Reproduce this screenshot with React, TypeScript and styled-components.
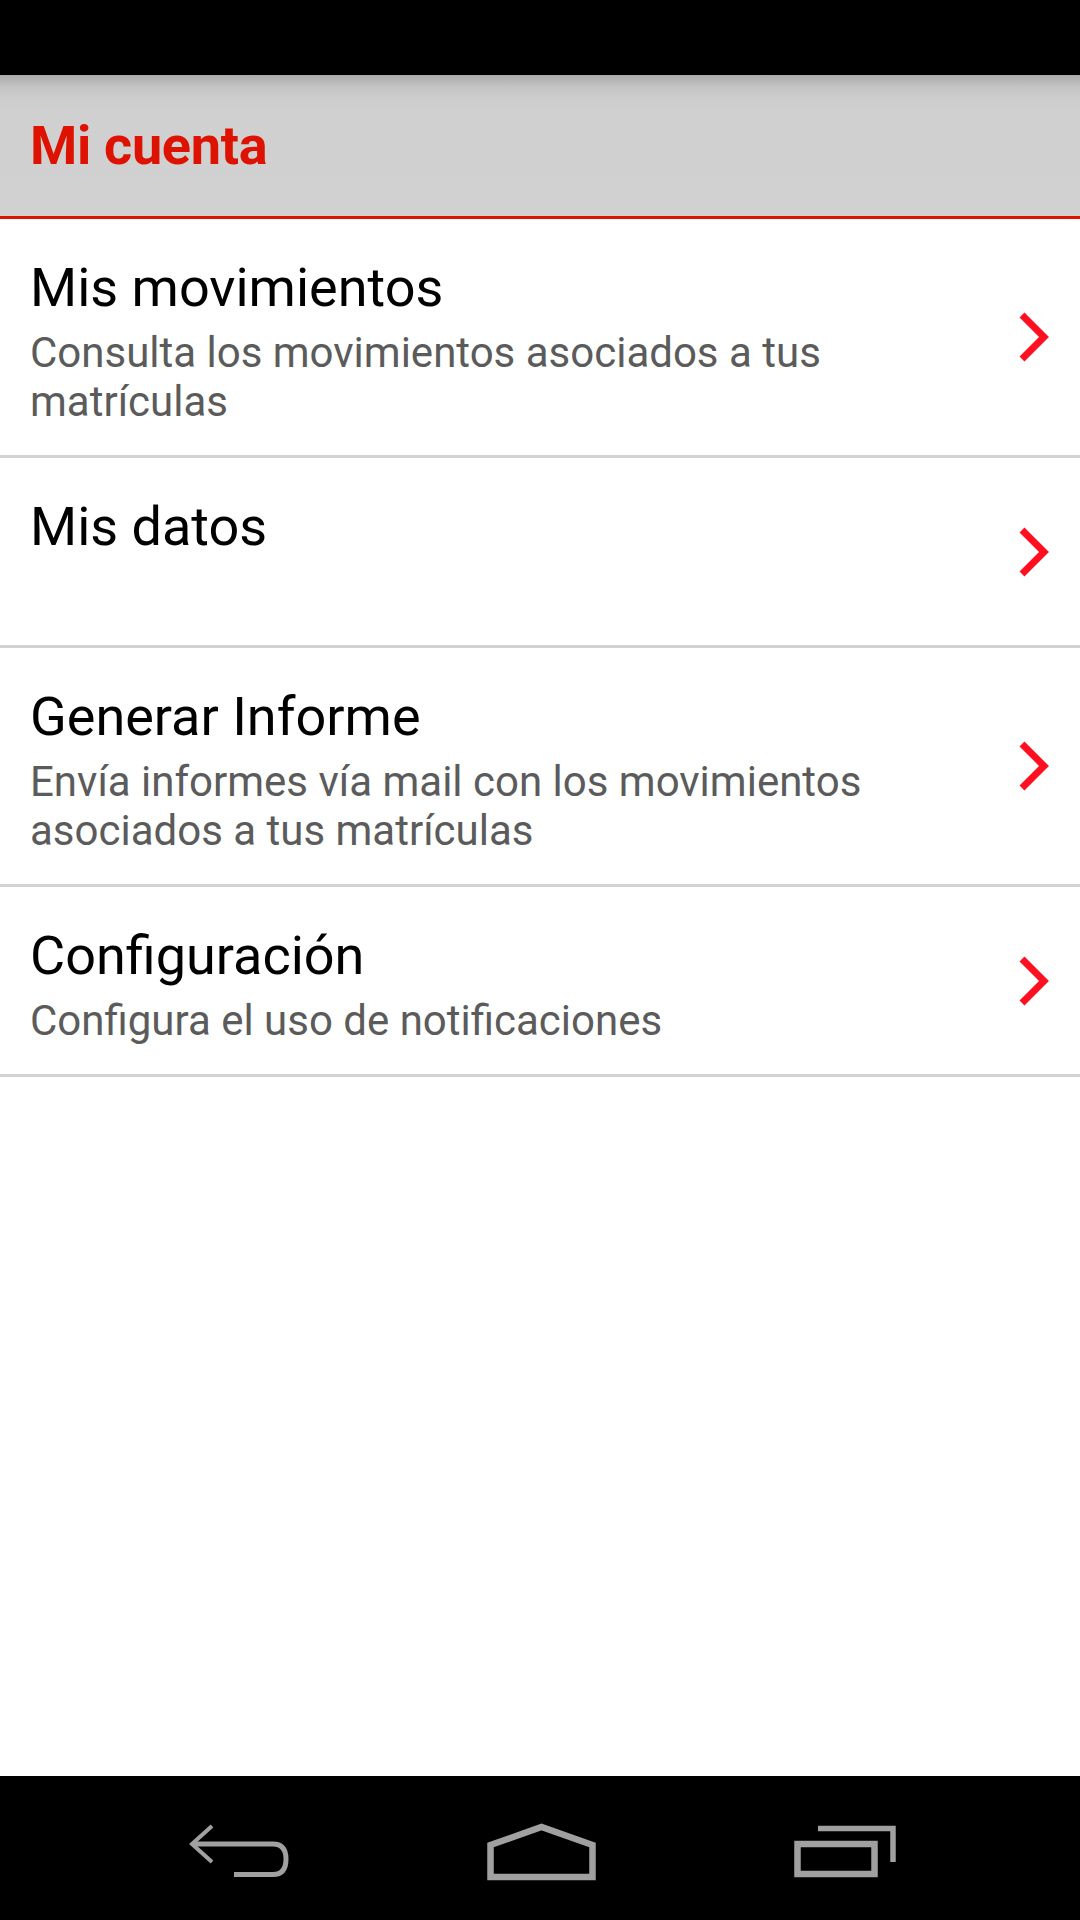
import React from 'react'
import styled, { createGlobalStyle } from 'styled-components'

const GlobalStyle = createGlobalStyle`
  html, body {
    margin: 0;
    padding: 0;
    background: #ffffff;
  }
  body {
    font-family: Roboto, 'Noto Sans', sans-serif;
  }
`

const Screen = styled.div`
  width: 1080px;
  height: 1920px;
  display: flex;
  flex-direction: column;
  background: #ffffff;
  overflow: hidden;
`

const StatusBar = styled.div`
  height: 75px;
  background: #000000;
  flex-shrink: 0;
`

const Header = styled.div`
  height: 141px;
  display: flex;
  align-items: center;
  padding: 0 30px;
  background: linear-gradient(to bottom, #a9a9a9 0px, #c4c4c4 12px, #cdcdcd 24px, #d0d0d0 40px, #d1d1d1 100%);
  border-bottom: 3px solid #dd1200;
  flex-shrink: 0;
`

const HeaderTitle = styled.h1`
  margin: 0;
  font-family: Roboto, sans-serif;
  font-weight: 700;
  font-size: 54px;
  letter-spacing: -0.3px;
  color: #dd1200;
`

const List = styled.div`
  flex: 1;
  display: flex;
  flex-direction: column;
`

const Row = styled.div`
  display: flex;
  align-items: center;
  gap: 30px;
  padding: 37px 30px 29px 30px;
  border-bottom: 3px solid #d2d2d2;
`

const RowText = styled.div`
  flex: 1;
  display: flex;
  flex-direction: column;
  gap: 8px;
`

const RowTitle = styled.div`
  font-family: Roboto, sans-serif;
  font-size: 54px;
  line-height: 64px;
  color: #000000;
`

const RowSubtitle = styled.div`
  font-family: Roboto, sans-serif;
  font-size: 42px;
  line-height: 49px;
  min-height: 49px;
  color: #5b5b5b;
`

const Chevron = styled.svg`
  flex-shrink: 0;
  width: 32px;
  height: 50px;
  margin-top: -8px;
`

const NavBar = styled.div`
  height: 144px;
  background: #000000;
  display: flex;
  align-items: center;
  justify-content: center;
  gap: 196px;
  padding: 6px 0 0 6px;
  box-sizing: border-box;
  flex-shrink: 0;
`

const NavIcon = styled.svg`
  display: block;
`

const items = [
  { title: 'Mis movimientos', subtitle: 'Consulta los movimientos asociados a tus matrículas' },
  { title: 'Mis datos', subtitle: '' },
  { title: 'Generar Informe', subtitle: 'Envía informes vía mail con los movimientos asociados a tus matrículas' },
  { title: 'Configuración', subtitle: 'Configura el uso de notificaciones' },
]

const ArrowRight = () => (
  <Chevron viewBox="0 0 32 50">
    <path d="M4 3 L26 25 L4 47" fill="none" stroke="#ff1020" strokeWidth={7} strokeLinejoin="miter" />
  </Chevron>
)

const BackIcon = () => (
  <NavIcon width={102} height={56} viewBox="0 0 102 56">
    <path d="M23 3 L3 21 L23 39" fill="none" stroke="#a0a0a0" strokeWidth={4} />
    <path d="M3 21 H84 Q97 21 97 36 Q97 51.5 84 51.5 H45" fill="none" stroke="#a0a0a0" strokeWidth={5} />
  </NavIcon>
)

const HomeIcon = () => (
  <NavIcon width={109} height={59} viewBox="0 0 109 59">
    <path d="M3.5 23 L54.5 5 L105.5 23 V55 H3.5 Z" fill="none" stroke="#a0a0a0" strokeWidth={6.5} />
  </NavIcon>
)

const RecentsIcon = () => (
  <NavIcon width={106} height={55} viewBox="0 0 106 55">
    <rect x={5.5} y={20} width={77} height={30} fill="none" stroke="#a0a0a0" strokeWidth={6.5} />
    <path d="M26 4.5 H101 V38" fill="none" stroke="#a0a0a0" strokeWidth={5.5} />
  </NavIcon>
)

const App = () => (
  <>
    <GlobalStyle />
    <Screen>
      <StatusBar />
      <Header>
        <HeaderTitle>Mi cuenta</HeaderTitle>
      </Header>
      <List>
        {items.map(item => (
          <Row key={item.title}>
            <RowText>
              <RowTitle>{item.title}</RowTitle>
              <RowSubtitle>{item.subtitle}</RowSubtitle>
            </RowText>
            <ArrowRight />
          </Row>
        ))}
      </List>
      <NavBar>
        <BackIcon />
        <HomeIcon />
        <RecentsIcon />
      </NavBar>
    </Screen>
  </>
)

export default App
